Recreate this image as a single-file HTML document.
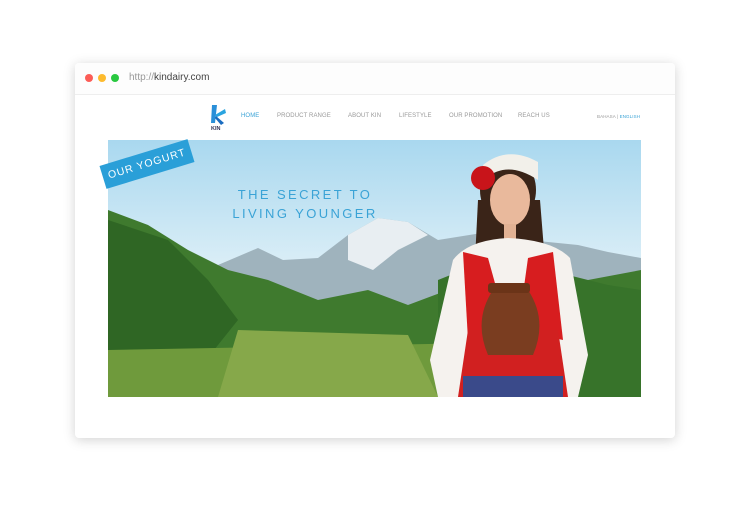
<!DOCTYPE html>
<html><head><meta charset="utf-8"><style>
*{margin:0;padding:0;box-sizing:border-box}
body{width:750px;height:520px;background:#fff;position:relative;overflow:hidden;font-family:"Liberation Sans",sans-serif}
.win{position:absolute;left:75px;top:63px;width:600px;height:375px;background:#fff;border-radius:4px;box-shadow:0 2px 12px rgba(0,0,0,.18)}
.bar{height:32px;border-bottom:1px solid #eee;background:#fdfdfd;border-radius:4px 4px 0 0;position:relative}
.dot{position:absolute;top:11px;width:8px;height:8px;border-radius:50%}
.url{position:absolute;left:54px;top:9px;font-size:10px;color:#999}
.url b{font-weight:normal;color:#444}
.nav{position:absolute;top:50px;font-size:6px;color:#999;letter-spacing:.1px}
.hero{position:absolute;left:33px;top:77px;width:533px;height:257px;overflow:hidden}
.tag{position:absolute;left:101px;top:152px;width:92px;height:24px;background:#2a9fd8;transform:rotate(-17deg);color:#fff;font-size:10.5px;letter-spacing:1px;text-align:center;line-height:24px}
.h{position:absolute;left:220px;width:170px;text-align:center;color:#3aa3d6;font-size:13px;letter-spacing:2.4px}
</style></head><body>
<div class="win">
<div class="bar"><div class="dot" style="left:10px;background:#fc5d57"></div><div class="dot" style="left:23px;background:#fdbb2e"></div><div class="dot" style="left:36px;background:#29c840"></div><div class="url">http://<b>kindairy.com</b></div></div>
<svg style="position:absolute;left:134px;top:40px" width="20" height="28" viewBox="0 0 20 28"><path d="M3 2 L8 2 L6 20 L2 20Z" fill="#2a8fd8"/><path d="M6 12 L16 6 L17 10 L8 14Z" fill="#2aa4e0"/><path d="M7 13 L15 20 L12 22 L6 15Z" fill="#1a6cc0"/><text x="2" y="27" font-size="5.5" fill="#335" font-family="Liberation Sans" font-weight="bold">KIN</text></svg>
<div class="nav" style="left:166px;color:#3aa3d6">HOME</div>
<div class="nav" style="left:202px">PRODUCT RANGE</div>
<div class="nav" style="left:273px">ABOUT KIN</div>
<div class="nav" style="left:324px">LIFESTYLE</div>
<div class="nav" style="left:374px">OUR PROMOTION</div>
<div class="nav" style="left:443px">REACH US</div>
<div class="nav" style="left:522px;font-size:4.5px;top:51px">BAHASA | <span style="color:#3aa3d6">ENGLISH</span></div>
<div class="hero">
<svg width="533" height="257" viewBox="0 0 533 257">
<defs><linearGradient id="s" x1="0" y1="0" x2="0" y2="1"><stop offset="0" stop-color="#a9d8ef"/><stop offset="1" stop-color="#e4f2f8"/></linearGradient></defs>
<rect width="533" height="150" fill="url(#s)"/>
<path d="M110 125 L150 108 L175 120 L210 118 L240 95 L270 78 L300 82 L330 100 L380 92 L420 100 L470 105 L500 112 L533 118 L533 200 L110 200Z" fill="#9fb3bd"/>
<path d="M240 95 L270 78 L300 82 L320 95 L290 110 L265 130 L240 120Z" fill="#e8eef2"/>
<path d="M0 70 L40 85 L80 110 L120 130 L160 140 L210 160 L260 150 L300 165 L340 150 L420 155 L480 140 L533 130 L533 257 L0 257Z" fill="#3f7a2e"/>
<path d="M0 80 L60 100 L100 140 L130 180 L90 230 L0 240Z" fill="#2f6624"/>
<path d="M0 210 L533 200 L533 257 L0 257Z" fill="#6f9a3c"/>
<path d="M130 190 L300 195 L330 257 L110 257Z" fill="#86a84a"/>
<path d="M330 140 L380 120 L440 130 L500 145 L533 150 L533 257 L330 257Z" fill="#37732a"/>
<ellipse cx="400" cy="50" rx="28" ry="34" fill="#3a2418"/>
<path d="M370 60 L365 160 L440 160 L432 60Z" fill="#3a2418"/>
<ellipse cx="402" cy="60" rx="20" ry="26" fill="#e9b99c"/>
<path d="M375 25 Q400 5 430 22 L430 40 Q400 20 378 38Z" fill="#f2f0ea"/>
<circle cx="375" cy="38" r="12" fill="#c8141a"/>
<rect x="396" y="84" width="12" height="18" fill="#e2b294"/>
<path d="M345 120 Q360 100 400 98 Q445 100 462 118 L480 215 L470 257 L330 257 L322 220Z" fill="#f5f2ee"/>
<path d="M355 112 L380 118 L400 190 L360 200Z" fill="#d71d1f"/>
<path d="M445 112 L420 118 L410 190 L455 200Z" fill="#d71d1f"/>
<path d="M360 190 L450 190 L460 257 L350 257Z" fill="#d12020"/>
<rect x="355" y="236" width="100" height="21" fill="#3a4a8a"/>
<path d="M385 150 L420 150 Q440 180 425 215 L380 215 Q365 180 385 150Z" fill="#7a3d20"/>
<rect x="380" y="143" width="42" height="10" rx="3" fill="#6b3418"/>
</svg>
</div>
</div>
<div class="tag">OUR YOGURT</div>
<div class="h" style="top:187px">THE SECRET TO</div>
<div class="h" style="top:206px">LIVING YOUNGER</div>
</body></html>
